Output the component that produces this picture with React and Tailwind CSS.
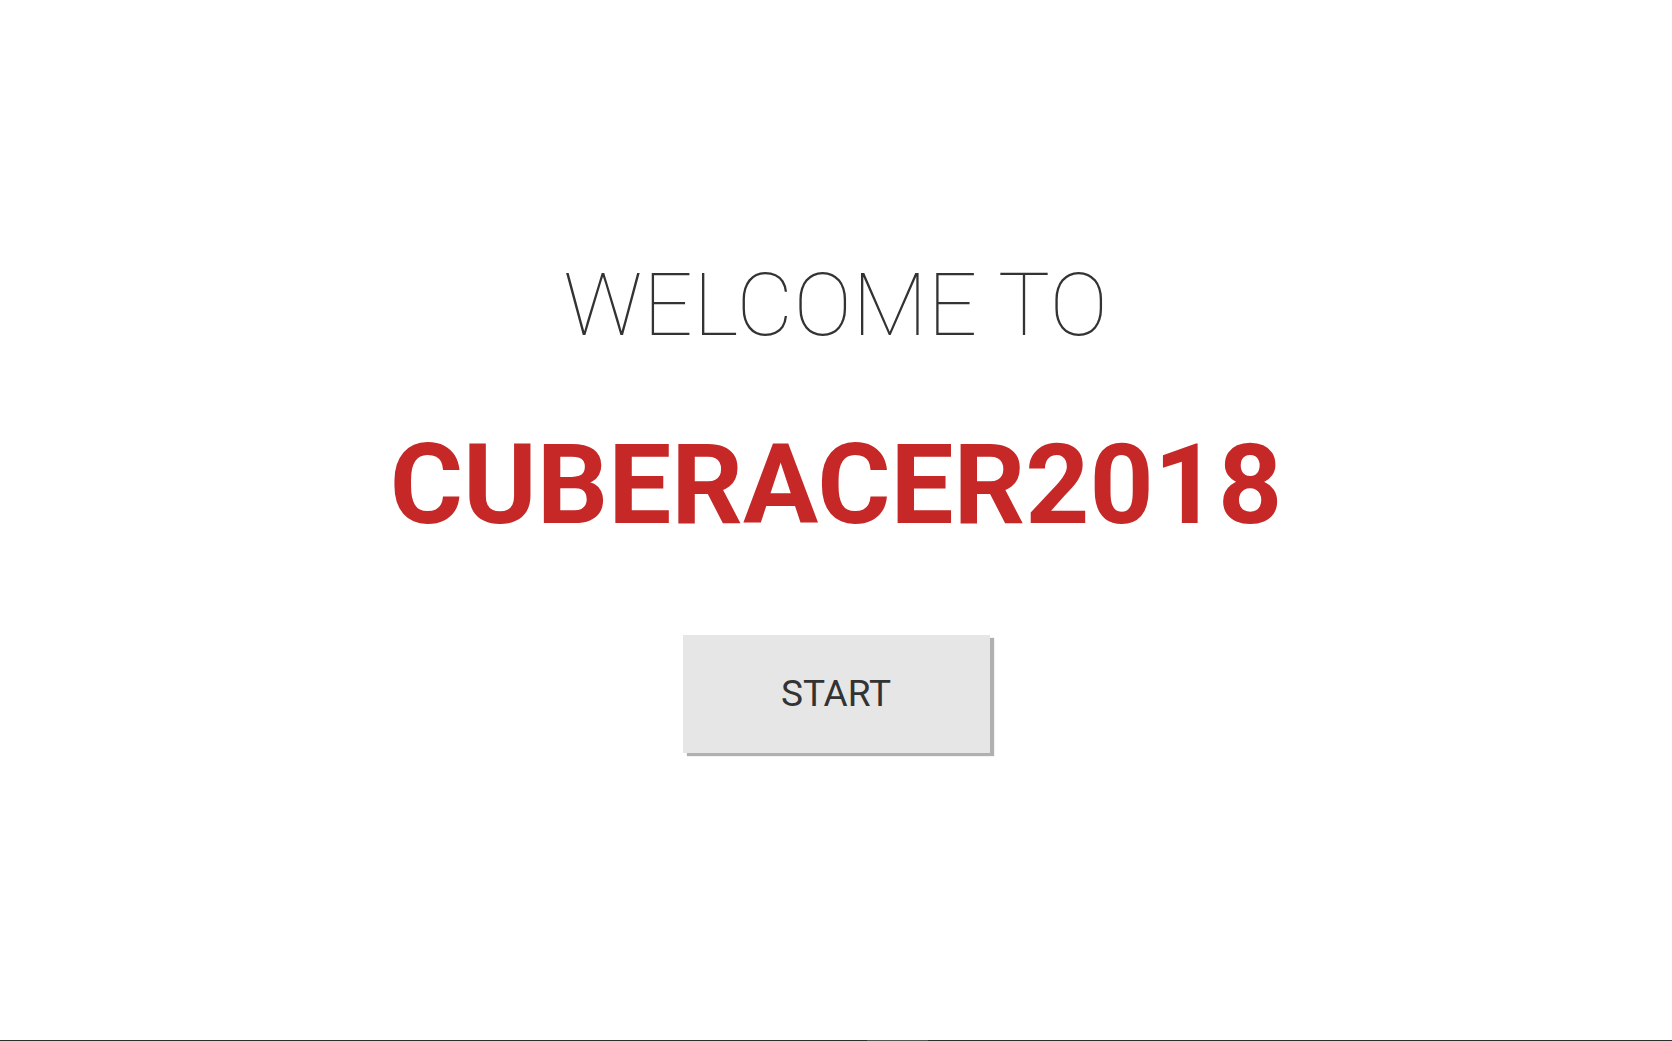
import React from 'react';

function App() {
  return (
    <div className="h-screen bg-white flex flex-col font-['Roboto',sans-serif] overflow-hidden">
      <main className="flex-1 flex flex-col items-center pt-[262px]">
        <h2 className="text-[87px] leading-none font-thin text-[#333333] tracking-[0.8px]">WELCOME TO</h2>
        <h1 className="mt-[80px] text-[112px] leading-none font-bold text-[#c62828]">CUBERACER2018</h1>
        <button className="mt-[94px] w-[307px] h-[118px] bg-[#e6e6e6] text-[#333333] text-[37px] font-normal shadow-[4px_3px_1px_#b0b0b0] flex items-center justify-center">
          START
        </button>
      </main>
      <div className="h-px bg-[#2e2e2e] flex">
        <div className="ml-[867px] w-[61px] bg-[#555555]" />
      </div>
    </div>
  );
}

export default App;
